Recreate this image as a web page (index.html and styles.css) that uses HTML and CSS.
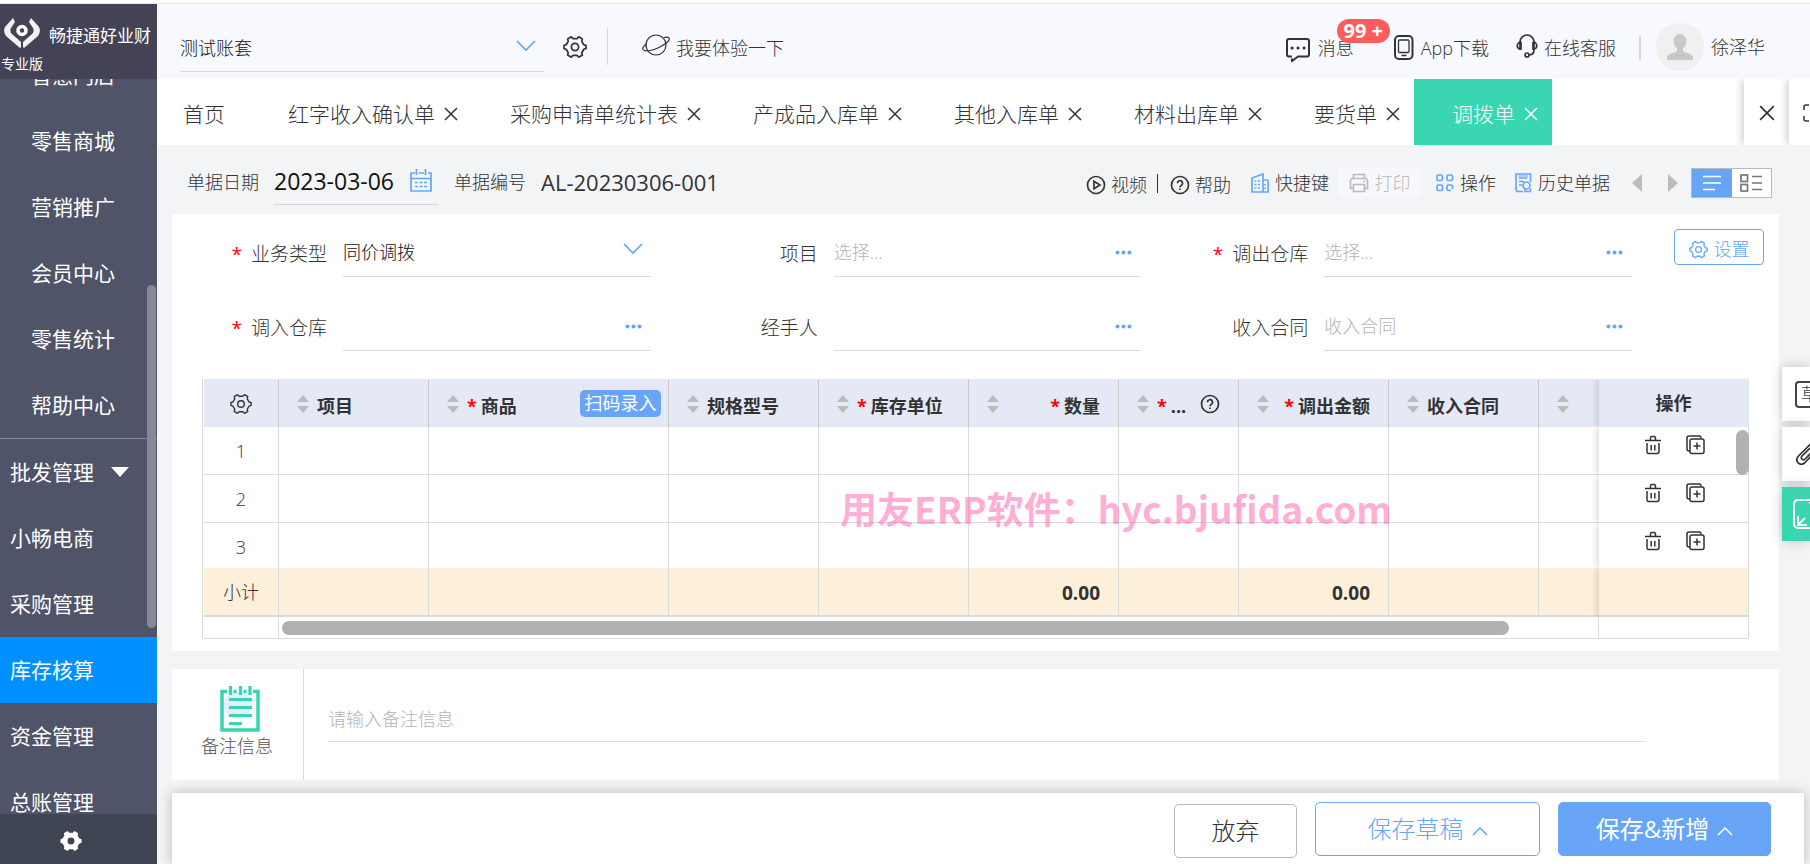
FILE: index.html
```html
<!DOCTYPE html>
<html lang="zh-CN">
<head>
<meta charset="utf-8">
<title>调拨单</title>
<link rel="stylesheet" href="styles.css">
</head>
<body>
<svg class="defs" aria-hidden="true">
  <symbol id="i-gear" viewBox="0 0 24 24"><path d="M8.2 1.8 10 3.6h4l1.800-1.800 3.600 2.100-.6 2.500 2 3.400 2.200.6v3.200l-2.200.7-2 3.400.6 2.400-3.600 2.100L14 20.400h-4l-1.800 1.800-3.600-2.100.6-2.400-2-3.400-2.200-.7v-3.200l2.200-.6 2-3.400-.6-2.500z" stroke-linejoin="round"/><circle cx="12" cy="12" r="3.600"/></symbol>
  <symbol id="i-down" viewBox="0 0 20 12"><path d="M1 1l9 9 9-9"/></symbol>
  <symbol id="i-up" viewBox="0 0 16 10"><path d="M1 9l7-7 7 7"/></symbol>
  <symbol id="i-x" viewBox="0 0 14 14"><path d="M1 1l12 12M13 1L1 13"/></symbol>
  <symbol id="i-dots" viewBox="0 0 17 5"><circle cx="2.500" cy="2.500" r="2"/><circle cx="8.500" cy="2.500" r="2"/><circle cx="14.500" cy="2.500" r="2"/></symbol>
  <symbol id="i-sort" viewBox="0 0 12 18"><path d="M6 0l6 7H0zM0 11h12l-6 7z"/></symbol>
  <symbol id="i-help" viewBox="0 0 20 20"><circle cx="10" cy="10" r="8.500"/><path d="M7.500 8.200a2.500 2.500 0 1 1 3.700 2.200c-.8.500-1.200.9-1.200 1.900M10 13.500v1.600"/></symbol>
  <symbol id="i-trash" viewBox="0 0 16 20"><path d="M0 5.500h16M5.500 5V3a1.500 1.500 0 0 1 1.500-1.500h2A1.500 1.500 0 0 1 10.500 3v2M2 8v9a1.500 1.500 0 0 0 1.500 1.500h9A1.500 1.500 0 0 0 14 17V8M6.200 10v5.500M9.800 10v5.500"/></symbol>
  <symbol id="i-copy" viewBox="0 0 20 20"><path d="M4 16H3a2 2 0 0 1-2-2V3a2 2 0 0 1 2-2h10a2 2 0 0 1 2 2"/><rect x="4" y="4" width="14" height="14.500" rx="2"/><path d="M11 7.500v7M7.500 11h7"/></symbol>
</svg>

<div class="app">
  <aside class="sidebar">
    <div class="brand">
      <div class="brand-row">
        <svg class="brand-logo" viewBox="0 0 36 30"><path d="M9 0 1 9c-1.500 3-1 6 1 9l14 12 1-1v-5L8 16c-2-2-2-4-1-6l4-6zM27 0l8 9c1.500 3 1 6-1 9L20 30l-1-1v-5l9-8c2-2 2-4 1-6l-4-6z"/><circle cx="18" cy="12.500" r="4" fill="none" stroke="#fff" stroke-width="3.500"/></svg>
        <span class="brand-name">畅捷通好业财</span>
      </div>
      <span class="brand-edition">专业版</span>
    </div>
    <nav class="menu">
      <div class="menu-list">
        <div class="menu-group menu-sub">
          <a href="#">智慧门店</a><a href="#">零售商城</a><a href="#">营销推广</a><a href="#">会员中心</a><a href="#">零售统计</a><a href="#">帮助中心</a>
        </div>
        <div class="menu-group">
          <a href="#">批发管理 <svg class="caret" viewBox="0 0 18 10"><path d="M0 0h18l-9 10z"/></svg></a><a href="#">小畅电商</a><a href="#">采购管理</a><a href="#" class="active">库存核算</a><a href="#">资金管理</a><a href="#">总账管理</a>
        </div>
      </div>
      <span class="menu-thumb"></span>
    </nav>
    <button class="menu-settings" aria-label="系统设置"><svg class="gear-solid" viewBox="0 0 24 24"><path fill-rule="evenodd" d="M8.200 1.200 10 3h4l1.800-1.800 4 2.300-.6 2.500 2 3.400 2.300.6v4l-2.300.7-2 3.400.6 2.400-4 2.300L14 21h-4l-1.800 1.800-4-2.300.6-2.400-2-3.400-2.300-.7v-4l2.300-.6 2-3.400-.6-2.500zM12 8.200a3.800 3.800 0 1 0 0 7.600 3.800 3.800 0 0 0 0-7.600z"/></svg></button>
  </aside>

  <main class="main">
    <header class="topbar">
      <label class="account"><select aria-label="账套"><option>测试账套</option></select><svg class="line blue chevron"><use href="#i-down"/></svg></label>
      <button class="icon-btn" aria-label="设置"><svg class="line gear-lg"><use href="#i-gear"/></svg></button>
      <span class="divider tall"></span>
      <a class="top-link trial" href="#"><svg class="line thin planet" viewBox="0 0 28 22"><circle cx="14" cy="11" r="10"/><path d="M4.500 10C1.500 12 .3 14 1 15.500c1.500 2.500 9 1.500 16-2S28.500 6 27 4c-.6-.8-2.500-1-5-.3"/></svg>我要体验一下</a>
      <div class="top-right">
        <a class="top-link message" href="#"><svg class="line icon-msg" viewBox="0 0 24 24"><path d="M6 18.500H3a2 2 0 0 1-2-2V3a2 2 0 0 1 2-2h18a2 2 0 0 1 2 2v13.500a2 2 0 0 1-2 2h-9L6 23v-2.500"/><path class="dots" d="M6 10h.1M12 10h.1M18 10h.1"/></svg>消息<span class="badge">99 +</span></a>
        <a class="top-link app-link" href="#"><svg class="line icon-phone" viewBox="0 0 20 25"><rect x="1" y="1" width="17.500" height="23" rx="4"/><rect x="4.500" y="5" width="10.500" height="12.500" rx="1" stroke-width="1.300"/><path d="M7.500 20.500h5" stroke-width="1.500"/></svg>App下载</a>
        <a class="top-link service" href="#"><svg class="line icon-head" viewBox="0 0 22 24"><path d="M4 8a7 7 0 0 1 14 0M18 8v8c0 3-2 5-5.500 5M4 8v8"/><path d="M5 8.500c-5-1-5 7.500 0 6.500zM17 8.500c5-1 5 7.500 0 6.500z"/><circle cx="11" cy="21" r="2"/></svg>在线客服</a>
        <span class="divider"></span>
        <a class="top-link user" href="#"><span class="avatar"><svg viewBox="0 0 26 26"><ellipse cx="13" cy="7.500" rx="6.500" ry="7.500"/><path d="M10 12h6v5c2 2 9 2 10 6v3H0v-3c1-4 8-4 10-6z"/></svg></span>徐泽华</a>
      </div>
    </header>

    <div class="tabs">
      <div class="tab-list">
        <a class="tab home" href="#">首页</a>
        <div class="tab"><a href="#">红字收入确认单</a><button aria-label="关闭"><svg class="line"><use href="#i-x"/></svg></button></div>
        <div class="tab"><a href="#">采购申请单统计表</a><button aria-label="关闭"><svg class="line"><use href="#i-x"/></svg></button></div>
        <div class="tab"><a href="#">产成品入库单</a><button aria-label="关闭"><svg class="line"><use href="#i-x"/></svg></button></div>
        <div class="tab"><a href="#">其他入库单</a><button aria-label="关闭"><svg class="line"><use href="#i-x"/></svg></button></div>
        <div class="tab"><a href="#">材料出库单</a><button aria-label="关闭"><svg class="line"><use href="#i-x"/></svg></button></div>
        <div class="tab"><a href="#">要货单</a><button aria-label="关闭"><svg class="line"><use href="#i-x"/></svg></button></div>
        <div class="tab current"><a href="#">调拨单</a><button aria-label="关闭"><svg class="line"><use href="#i-x"/></svg></button></div>
      </div>
      <button class="tab-tool close-all" aria-label="关闭全部"><svg class="line"><use href="#i-x"/></svg></button>
      <button class="tab-tool full" aria-label="全屏"><svg class="line" viewBox="0 0 18 18"><path d="M1 6V3a2 2 0 0 1 2-2h3M12 1h3a2 2 0 0 1 2 2v3M17 12v3a2 2 0 0 1-2 2h-3M6 17H3a2 2 0 0 1-2-2v-3"/></svg></button>
    </div>

    <div class="content">
      <div class="doc-bar">
        <div class="doc-info">
          <label for="doc-date">单据日期</label>
          <span class="date-box"><input id="doc-date" value="2023-03-06"><svg class="line blue" viewBox="0 0 22 23"><path d="M5 4H1v18h20V4h-3M9 4h5M1 9.500h20M6.500 0v6M15.500 0v6"/><path d="M5 13.500h3M9.500 13.500h3M14 13.500h3M5 17.500h3M9.500 17.500h3M14 17.500h3" stroke-width="1.500"/></svg></span>
          <span>单据编号</span><span class="doc-no">AL-20230306-001</span>
        </div>
        <div class="doc-tools">
          <button class="lower"><svg class="line" viewBox="0 0 20 20"><circle cx="10" cy="10" r="8.500"/><path d="M8 6.200v7.600l6-3.800z"/></svg>视频</button>
          <span class="bar"></span>
          <button class="lower help"><svg class="line"><use href="#i-help"/></svg>帮助</button>
          <button class="quick"><svg class="line blue" viewBox="0 0 18 20"><path d="M12 19H1V5l11-4zM12 7h4a1.200 1.200 0 0 1 1.200 1.200V19H12"/><path d="M3.500 8h2M7 8h2M3.500 11.500h2M7 11.500h2M3.500 15h2M7 15h2M14 11v1.500M14 14.500v1.500"/></svg>快捷键</button>
          <button class="print" disabled><svg class="line" viewBox="0 0 20 20"><path d="M4.500 5.500v-4h11v4M4.500 15.500h-3V8A2.500 2.500 0 0 1 4 5.500h12A2.500 2.500 0 0 1 18.500 8v7.500h-3M4.500 11.500h11v7h-11zM14 8.500h2"/></svg>打印</button>
          <button class="operate"><svg class="line blue" viewBox="0 0 18 18"><rect x="1" y="1" width="5.500" height="5.500" rx="1.500"/><rect x="11" y="1" width="5.500" height="5.500" rx="1.500"/><rect x="1" y="11" width="5.500" height="5.500" rx="1.500"/><path d="M16.500 15v-2.500A1.500 1.500 0 0 0 15 11h-2.500a1.500 1.500 0 0 0-1.500 1.500V15a1.500 1.500 0 0 0 1.500 1.500H15"/></svg>操作</button>
          <button class="history"><svg class="line blue" viewBox="0 0 17 20"><path d="M8 18.500H2L1 16V1h14.500v8M4 5h8.500M4 8.500h5M4 12h3"/><path d="M3 3h10" stroke-width="1"/><circle cx="11.500" cy="12.500" r="3.500"/><path d="M10 16v2.500h5l1-3"/></svg>历史单据</button>
          <button class="step prev" aria-label="上一张"><svg viewBox="0 0 10 18"><path d="M10 0v18L0 9z"/></svg></button>
          <button class="step next" aria-label="下一张"><svg viewBox="0 0 10 18"><path d="M0 0v18l10-9z"/></svg></button>
          <span class="view-toggle">
            <button class="on" aria-label="列表视图"><svg class="line" viewBox="0 0 18 16"><path d="M0 1.500h18M0 8h18M0 14.500h12"/></svg></button>
            <button aria-label="卡片视图"><svg class="line" viewBox="0 0 22 18"><rect x="1" y="1" width="6.500" height="6.500"/><rect x="1" y="10.500" width="6.500" height="6.500"/><path d="M12 2.500h10M12 9h10M12 15.500h10"/></svg></button>
          </span>
        </div>
      </div>

      <section class="panel form-panel">
        <div class="form-top">
          <div class="fields">
            <div class="field"><label for="f1"><i>*</i>业务类型</label><div class="control"><select id="f1"><option>同价调拨</option></select><svg class="line blue chevron"><use href="#i-down"/></svg></div></div>
            <div class="field"><label for="f2">项目</label><div class="control"><input id="f2" placeholder="选择..."><button aria-label="选择项目"><svg class="more"><use href="#i-dots"/></svg></button></div></div>
            <div class="field"><label for="f3"><i>*</i>调出仓库</label><div class="control"><input id="f3" placeholder="选择..."><button aria-label="选择调出仓库"><svg class="more"><use href="#i-dots"/></svg></button></div></div>
            <div class="field"><label for="f4"><i>*</i>调入仓库</label><div class="control"><input id="f4"><button aria-label="选择调入仓库"><svg class="more"><use href="#i-dots"/></svg></button></div></div>
            <div class="field"><label for="f5">经手人</label><div class="control"><input id="f5"><button aria-label="选择经手人"><svg class="more"><use href="#i-dots"/></svg></button></div></div>
            <div class="field"><label for="f6">收入合同</label><div class="control"><input id="f6" placeholder="收入合同"><button aria-label="选择收入合同"><svg class="more"><use href="#i-dots"/></svg></button></div></div>
          </div>
          <button class="setup"><svg class="line"><use href="#i-gear"/></svg>设置</button>
        </div>

        <div class="grid-wrap">
          <table class="grid">
            <colgroup><col class="c-no"><col class="c-m"><col class="c-goods"><col class="c-m"><col class="c-m"><col class="c-m"><col class="c-s"><col class="c-m"><col class="c-m"><col><col class="c-m"></colgroup>
            <thead>
              <tr>
                <th><svg class="line gear-md"><use href="#i-gear"/></svg></th>
                <th><div class="th"><svg class="sort"><use href="#i-sort"/></svg>项目</div></th>
                <th><div class="th"><svg class="sort"><use href="#i-sort"/></svg><i>*</i>商品<button class="scan">扫码录入</button></div></th>
                <th><div class="th"><svg class="sort"><use href="#i-sort"/></svg>规格型号</div></th>
                <th><div class="th"><svg class="sort"><use href="#i-sort"/></svg><i>*</i>库存单位</div></th>
                <th><div class="th end"><svg class="sort"><use href="#i-sort"/></svg><i>*</i>数量</div></th>
                <th><div class="th"><svg class="sort"><use href="#i-sort"/></svg><i>*</i>...<svg class="line q"><use href="#i-help"/></svg></div></th>
                <th><div class="th end"><svg class="sort"><use href="#i-sort"/></svg><i>*</i>调出金额</div></th>
                <th><div class="th"><svg class="sort"><use href="#i-sort"/></svg>收入合同</div></th>
                <th><div class="th"><svg class="sort"><use href="#i-sort"/></svg></div></th>
                <th class="act">操作</th>
              </tr>
            </thead>
            <tbody>
              <tr><td>1</td><td></td><td></td><td></td><td></td><td></td><td></td><td></td><td></td><td></td><td class="act"><div class="ops"><button aria-label="删除"><svg class="line trash"><use href="#i-trash"/></svg></button><button aria-label="复制"><svg class="line copy"><use href="#i-copy"/></svg></button></div></td></tr>
              <tr><td>2</td><td></td><td></td><td></td><td></td><td></td><td></td><td></td><td></td><td></td><td class="act"><div class="ops"><button aria-label="删除"><svg class="line trash"><use href="#i-trash"/></svg></button><button aria-label="复制"><svg class="line copy"><use href="#i-copy"/></svg></button></div></td></tr>
              <tr class="last"><td>3</td><td></td><td></td><td></td><td></td><td></td><td></td><td></td><td></td><td></td><td class="act"><div class="ops"><button aria-label="删除"><svg class="line trash"><use href="#i-trash"/></svg></button><button aria-label="复制"><svg class="line copy"><use href="#i-copy"/></svg></button></div></td></tr>
            </tbody>
            <tfoot>
              <tr class="sum"><td>小计</td><td></td><td></td><td></td><td></td><td class="num">0.00</td><td></td><td class="num">0.00</td><td></td><td></td><td class="act"></td></tr>
              <tr class="track"><td></td><td colspan="9"><div class="thumb-x"></div></td><td></td></tr>
            </tfoot>
          </table>
          <span class="thumb-y"></span>
          <span class="watermark">用友ERP软件：hyc.bjufida.com</span>
        </div>
      </section>

      <section class="panel note">
        <div class="note-side">
          <svg class="note-icon" viewBox="0 0 40 46"><circle cx="18" cy="19" r="14" fill="#e3eefc"/><path d="M7 5.500H2v38.500h36V5.500h-5M13.500 5.500h3M23.500 5.500h3" fill="none" stroke="#38d5b0" stroke-width="3.500"/><path d="M10.500 0v9M20.500 0v9M30 0v9M9 13.500h23M9 21.500h23M9 29.500h23M9 37.500h13" fill="none" stroke="#38d5b0" stroke-width="3.200"/></svg>
          <label for="note">备注信息</label>
        </div>
        <div class="note-main"><input id="note" placeholder="请输入备注信息"></div>
      </section>
    </div>

    <footer class="actions">
      <button class="cancel">放弃</button>
      <button class="draft">保存草稿<svg class="line"><use href="#i-up"/></svg></button>
      <button class="save">保存&amp;新增<svg class="line"><use href="#i-up"/></svg></button>
    </footer>
  </main>

  <div class="side-tools">
    <button aria-label="草稿"><span class="draft-mark">草</span></button>
    <button aria-label="附件"><svg class="line clip" viewBox="0 0 24 24"><path d="M21 9 10 20.500c-5 4.500-11-1.500-6.500-6.500L15 2.500c4-3.500 8.500 1 5 4.500L10 17c-2 2-5-.5-3-3l8-8"/></svg></button>
    <button class="green" aria-label="收起"><svg class="line expand" viewBox="0 0 30 30"><rect x="1" y="1" width="28" height="28" rx="4"/><path d="M5 17v9h9M5 26l7-7M25 13V4h-9M25 4l-7 7"/></svg></button>
  </div>
</div>
</body>
</html>
```
FILE: styles.css
```css
* { box-sizing: border-box; }
body {
  margin: 0;
  padding-top: 3px;
  background: #fff;
  color: #333;
  font: 300 18px/24px "Open Sans", "Noto Sans CJK SC", sans-serif;
  overflow: hidden;
}
a { color: inherit; text-decoration: none; }
button, input, select {
  font: inherit;
  color: inherit;
  background: none;
  border: 0;
  padding: 0;
  margin: 0;
  border-radius: 0;
  outline: 0;
  appearance: none;
}
button { display: flex; align-items: center; justify-content: center; white-space: nowrap; }
svg { display: block; flex: none; }
i { font-style: normal; font-weight: 400; color: #f00; }
.defs { position: absolute; width: 0; height: 0; }
.line { fill: none; stroke: currentColor; stroke-width: 1.7; }
.thin { stroke-width: 1.2; }
.blue { color: #68a5f7; }

.app { display: flex; height: calc(100vh - 3px); border-top: 1px solid #e8e9eb; }

/* sidebar */
.sidebar { flex: none; width: 157px; display: flex; flex-direction: column; background: #4f5468; color: #fff; font-weight: 400; }
.brand { flex: none; height: 75px; padding-top: 14px; background: #444356; }
.brand-row { display: flex; align-items: center; gap: 9px; padding-left: 4px; }
.brand-logo { width: 36px; height: 30px; fill: #f1f1f1; }
.brand-name { font-size: 17px; line-height: 24px; padding-top: 6px; white-space: nowrap; }
.brand-edition { display: block; padding: 6px 0 0 1px; font-size: 14px; line-height: 20px; }
.menu { flex: 1; min-height: 0; position: relative; overflow: hidden; }
.menu-list { margin-top: -37px; }
.menu a { display: flex; align-items: center; gap: 17px; height: 66px; padding-left: 10px; font-size: 21px; }
.menu-sub a { padding-left: 31px; }
.menu-sub { border-bottom: 1px solid #838797; }
.menu a.active { background: #0090ff; }
.caret { width: 18px; height: 10px; fill: #fff; }
.menu-thumb { position: absolute; right: 1px; top: 206px; width: 9px; height: 343px; border-radius: 5px; background: #868999; }
.menu-settings { flex: none; height: 50px; padding: 4px 16px 0 0; background: #404553; }
.gear-solid { width: 22px; height: 22px; fill: #fff; }

/* header */
.main { flex: 1; min-width: 0; display: flex; flex-direction: column; background: #f2f4f6; }
.topbar { height: 75px; flex: none; display: flex; align-items: center; padding: 0 45px 0 23px; background: #f8f9fe; }
.account { position: relative; width: 364px; height: 48px; margin-top: 13px; border-bottom: 1px solid #d9dade; }
.account select { width: 100%; height: 47px; color: #111; }
.chevron { position: absolute; right: 8px; top: 3px; width: 20px; height: 12px; pointer-events: none; }
.account .chevron { top: 16px; }
.icon-btn { margin: 10px 0 0 19px; }
.gear-lg { width: 24px; height: 24px; }
.divider { width: 2px; height: 24px; background: #d9dade; }
.divider.tall { width: 1px; height: 38px; margin: 8px 0 0 20px; }
.top-link { display: flex; align-items: center; white-space: nowrap; }
.trial { margin-left: 34px; gap: 6px; padding-top: 12px; }
.planet { width: 28px; height: 22px; margin-bottom: 5px; }
.top-right { margin-left: auto; display: flex; align-items: center; padding-top: 12px; }
.message { position: relative; gap: 8px; }
.icon-msg { width: 24px; height: 24px; margin-top: 4px; stroke-width: 2; }
.dots { stroke-width: 3; stroke-linecap: round; }
.badge { position: absolute; left: 51px; top: -15px; width: 53px; height: 24px; border-radius: 12px; background: #ff5c5c; color: #fff; font: 700 20px/24px "Open Sans", sans-serif; text-align: center; }
.icon-phone { width: 20px; height: 25px; stroke-width: 2; }
.app-link { margin-left: 40px; gap: 7px; }
.service { margin-left: 27px; gap: 6px; }
.icon-head { width: 22px; height: 24px; margin-bottom: 4px; }
.top-right .divider { margin: 0 15px 0 23px; }
.user { gap: 7px; margin-top: -2px; }
.avatar { width: 48px; height: 48px; border-radius: 50%; background: #f0f0f0; display: flex; align-items: center; justify-content: center; }
.avatar svg { width: 26px; height: 26px; fill: #c8c8c8; }

/* tabs */
.tabs { height: 66px; flex: none; display: flex; background: #fff; font-size: 21px; overflow: hidden; }
.tab-list { flex: 1; min-width: 0; display: flex; overflow: hidden; }
.tab { flex: none; display: flex; align-items: center; gap: 9px; padding: 4px 14px 0 38px; white-space: nowrap; }
.tab svg { width: 14px; height: 14px; }
.tab .line, .tab-tool .line { stroke-width: 1.5; }
.tab.home { padding: 4px 25px 0 26px; }
.tab.current { background: #3ad6b2; color: #fff; }
.tab-tool { flex: none; background: #fff; box-shadow: -2px 0 8px rgba(0,0,0,.2); padding-top: 2px; }
.close-all { width: 45px; }
.close-all svg { width: 16px; height: 16px; }
.full { width: 21px; justify-content: flex-start; padding-left: 14px; overflow: hidden; position: relative; }
.full svg { width: 18px; height: 18px; }

/* document bar */
.content { flex: 1; min-height: 0; }
.doc-bar { height: 69px; display: flex; justify-content: space-between; padding: 0 38px 0 30px; }
.doc-info { display: flex; align-items: center; padding-top: 5px; white-space: nowrap; }
.date-box { display: flex; align-items: flex-start; justify-content: space-between; width: 164px; height: 40px; margin: 6px 16px 0 15px; padding-right: 6px; border-bottom: 1px solid #d5d7da; }
.date-box input { width: 130px; height: 32px; font-size: 23px; font-weight: 400; line-height: 32px; color: #111; }
.date-box svg { width: 22px; height: 23px; margin-top: 4px; }
.doc-no { margin-left: 15px; font-size: 22px; font-weight: 400; }
.doc-tools { display: flex; align-items: center; padding-top: 7px; }
.doc-tools button { gap: 6px; }
.doc-tools svg { width: 20px; height: 20px; }
.doc-tools .lower { padding-top: 4px; gap: 5px; }
.doc-tools .bar { width: 1px; height: 19px; margin: 0 12px 0 10px; background: #333; }
.doc-tools .quick { margin-left: 20px; }
.doc-tools .quick svg { width: 18px; }
.doc-tools .print { width: 83px; height: 30px; margin: 0 15px 0 9px; border-radius: 4px; background: #f6f8fe; color: #bbb; }
.doc-tools .operate svg { width: 18px; height: 18px; }
.doc-tools .history { margin-left: 19px; }
.doc-tools .history svg { width: 17px; }
.doc-tools .step svg { width: 10px; height: 18px; fill: #bbb; }
.doc-tools .prev { margin-left: 22px; }
.doc-tools .next { margin: 0 13px 0 26px; }
.view-toggle { display: flex; width: 81px; height: 30px; border: 1px solid #b9bbbe; background: #fff; }
.view-toggle button { flex: 1; color: #777; }
.view-toggle .on { background: #68a5f7; color: #fff; }
.view-toggle .on svg { width: 18px; height: 16px; }
.view-toggle svg { width: 22px; height: 18px; }

/* form */
.panel { margin: 0 31px 0 15px; background: #fff; }
.form-panel { padding: 0 0 12px; }
.form-top { display: flex; }
.fields { flex: 1; display: grid; grid-template-columns: repeat(3, 1fr); row-gap: 37px; padding-top: 26px; }
.field { display: flex; padding-right: 12px; }
.field label { flex: none; width: 155px; margin-right: 16px; text-align: right; font-size: 19px; line-height: 28px; white-space: nowrap; }
.field label i { margin-right: 9px; }
.control { flex: 1; min-width: 0; height: 37px; display: flex; align-items: flex-start; position: relative; border-bottom: 1px solid #d9dade; }
.control input, .control select { flex: 1; min-width: 0; height: 24px; line-height: 24px; }
.control select { color: #111; }
.control button { height: 24px; padding-right: 9px; }
.more { width: 17px; height: 5px; fill: #68a5f7; }
::placeholder { color: #b4b4b4; opacity: 1; }
.setup { width: 90px; height: 36px; margin: 15px 15px 0 30px; padding-top: 4px; gap: 6px; border: 1px solid #68a5f7; border-radius: 4px; color: #68a5f7; }
.setup svg { width: 19px; height: 19px; }

/* table */
.grid-wrap { position: relative; margin: 28px 30px 0; border-left: 1px solid #d9d9d9; padding-left: 1px; }
.grid { width: 100%; table-layout: fixed; border-collapse: separate; border-spacing: 0; }
.c-no { width: 75px; }
.c-m { width: 150px; }
.c-goods { width: 240px; }
.c-s { width: 120px; }
.grid th, .grid td { padding: 0; border-right: 1px solid #dadada; }
.grid th { height: 48px; background: #e5e9f5; font-weight: 700; border-right-color: #c8c8c8; }
.grid th:last-child { border-right-color: #e5e9f5; }
.grid th:nth-last-child(2), .grid tr:not(.track) td:nth-last-child(2) { border-right: 0; }
.th { display: flex; align-items: center; padding: 5px 18px 0 18px; white-space: nowrap; }
.th .sort { width: 12px; height: 18px; margin: 0 8px 3px 0; fill: #bbb; }
.th i { margin-right: 4px; font-weight: 700; }
.th.end .sort { margin-right: auto; }
.scan { width: 81px; height: 27px; margin: -5px -11px 0 auto; border-radius: 5px; background: #68a5f7; color: #fff; font-weight: 400; }
.q { width: 20px; height: 20px; margin: 0 0 3px auto; }
.gear-md { width: 22px; height: 22px; margin: 2px auto 0; stroke-width: 1.500; }
.grid td { height: 48px; border-bottom: 1px solid #dadada; text-align: center; }
.grid .last td { height: 45px; padding-top: 2px; border-bottom: 0; }
.grid .act { position: relative; box-shadow: -3px 0 6px rgba(0,0,0,.12); clip-path: inset(0 0 0 -8px); }
.grid th.act { font-weight: 700; }
.ops { display: flex; justify-content: center; gap: 25px; padding: 0 0 12px 3px; }
.trash { width: 16px; height: 20px; stroke-width: 1.500; }
.copy { width: 20px; height: 20px; stroke-width: 1.500; }
.grid .sum td { height: 49px; background: #fdf0da; border-bottom: 2px solid #dadada; }
.grid .sum .num { padding: 3px 18px 0 0; text-align: right; font-size: 19px; font-weight: 700; }
.grid .track td { height: 22px; }
.thumb-x { width: 93%; height: 14px; margin-left: 3px; border-radius: 7px; background: #b1b1b1; }
.thumb-y { position: absolute; right: 0; top: 51px; width: 13px; height: 45px; border-radius: 7px; background: #b1b1b1; }
.watermark { position: absolute; left: 637px; top: 107px; color: rgba(255, 93, 174, .5); font: 700 37px/44px "Noto Sans CJK SC", sans-serif; white-space: nowrap; pointer-events: none; }

/* note */
.note { display: flex; margin-top: 18px; height: 111px; }
.note-side { flex: none; width: 132px; padding: 17px 0 0 29px; border-right: 1px solid #d9d9d9; color: #555; }
.note-icon { width: 40px; height: 46px; margin: 0 0 2px 19px; }
.note-main { flex: 1; padding: 34px 133px 0 24px; }
.note-main input { width: 100%; height: 39px; padding-bottom: 6px; border-bottom: 1px solid #d9dade; }

/* footer */
.actions { flex: none; display: flex; justify-content: flex-end; align-items: flex-start; height: 71px; margin: 0 6px 0 15px; padding: 9px 33px 0 0; background: #fff; box-shadow: 0 0 12px rgba(0,0,0,.25); font-size: 24px; }
.actions button { height: 54px; gap: 8px; border: 1px solid #68a5f7; border-radius: 5px; }
.actions svg { width: 16px; height: 10px; margin-top: 4px; stroke-width: 1.500; }
.actions .cancel { width: 123px; margin: 2px 18px 0 0; border-color: #b9b9b9; }
.actions .draft { width: 225px; margin-right: 18px; color: #68a5f7; }
.actions .save { width: 213px; background: #68a5f7; color: #fff; font-weight: 400; }

/* right edge tools */
.side-tools { position: fixed; right: 0; top: 367px; display: flex; flex-direction: column; gap: 6px; width: 28px; }
.side-tools button { height: 54px; padding-left: 13px; justify-content: flex-start; overflow: hidden; background: #fff; box-shadow: 0 0 14px rgba(0,0,0,.2); }
.side-tools .green { background: #3ad6b2; color: #fff; padding-left: 11px; }
.draft-mark { flex: none; width: 27px; height: 27px; border: 2px solid #444; border-radius: 4px; padding-left: 3px; line-height: 22px; }
.clip { width: 24px; height: 24px; }
.expand { width: 30px; height: 30px; stroke-width: 2; }
```
